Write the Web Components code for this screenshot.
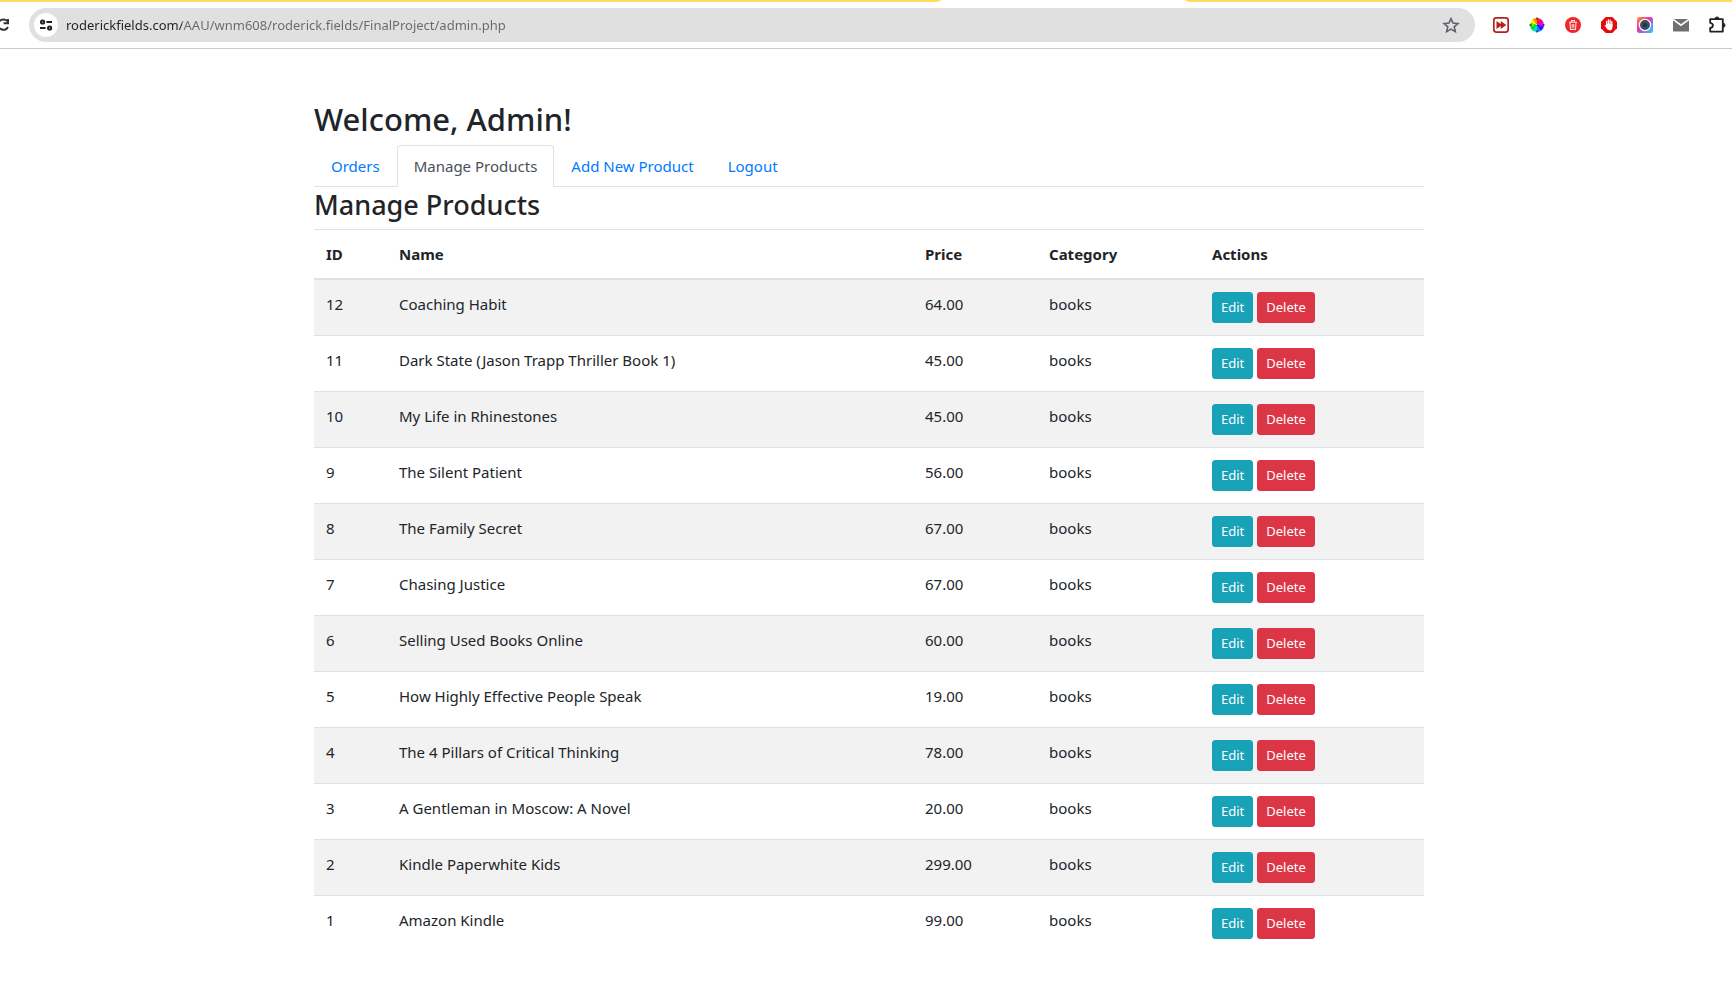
<!DOCTYPE html>
<html lang="en">
<head>
<meta charset="utf-8">
<title>Admin</title>
<style>
  body { margin: 0; background: #fff; color: #212529; font: 15px/24px "Noto Sans", "Open Sans", sans-serif; overflow-x: hidden; }
</style>
</head>
<body>
<browser-toolbar url="roderickfields.com/AAU/wnm608/roderick.fields/FinalProject/admin.php"></browser-toolbar>
<admin-page>
  <span slot="title">Welcome, Admin!</span>
  <nav-tabs slot="nav">
    <nav-tab href="#orders">Orders</nav-tab>
    <nav-tab href="#products" active>Manage Products</nav-tab>
    <nav-tab href="#new">Add New Product</nav-tab>
    <nav-tab href="#logout">Logout</nav-tab>
  </nav-tabs>
  <span slot="section">Manage Products</span>
  <product-table></product-table>
</admin-page>

<template id="toolbar-template">
  <style>
    :host { display: block; background: #fff; border-bottom: 1px solid #c9c9c9; }
    .strip { display: flex; height: 2px; }
    .strip span { background: #ffdc5c; }
    .strip .before { flex: 941; border-bottom-right-radius: 8px 2px; }
    .strip .current { flex: 244; background: #fff; }
    .strip .after { flex: 547; border-bottom-left-radius: 8px 2px; }
    .bar { display: flex; align-items: center; gap: 16px; padding: 6px 5px 6px 0; }
    button { display: block; flex: none; margin: 0; padding: 0; border: 0; background: none; line-height: 0; cursor: pointer; }
    .reload { width: 13px; }
    .address { flex: 1; display: flex; align-items: center; gap: 8px; height: 34px; padding: 0 14px 0 5px; border-radius: 17px; background: #e0e0e0; }
    .site { display: grid; place-items: center; width: 24px; height: 24px; border-radius: 50%; background: #fff; }
    input { flex: 1; min-width: 0; height: 24px; padding: 0; border: 0; outline: 0;
      font: 13px/24px "Noto Sans", "Open Sans", sans-serif; color: #5f6368; -webkit-text-fill-color: transparent;
      background: linear-gradient(to right, #202124 116px, #686868 116px); -webkit-background-clip: text; background-clip: text; }
    .wheel { width: 14px; height: 14px; margin: 3px; border-radius: 50%;
      background: conic-gradient(#f22 0 30deg, #f08 0 60deg, #d0f 0 100deg, #22f 0 145deg, #08f 0 180deg, #0dd 0 215deg, #0d4 0 260deg, #6e0 0 290deg, #fe0 0 325deg, #f80 0); }
  </style>
  <div class="strip"><span class="before"></span><span class="current"></span><span class="after"></span></div>
  <div class="bar">
    <button class="reload" aria-label="Reload">
      <svg width="13" height="16" viewBox="4 0 13 16" fill="none" stroke="#303134" stroke-width="2"><path d="M11.3 4.2A5.2 5.2 0 1 0 12 10"/><path d="M12 2v4.2H7.6"/></svg>
    </button>
    <div class="address">
      <button class="site" aria-label="Site information">
        <svg width="14" height="14" viewBox="0 0 14 14" fill="none" stroke="#202124" stroke-width="2"><circle cx="3.6" cy="4" r="1.6"/><path d="M7.4 4H13M1 10h5.6"/><circle cx="10.6" cy="10" r="1.6"/></svg>
      </button>
      <input type="text" aria-label="Address" spellcheck="false">
      <button aria-label="Bookmark this page">
        <svg width="20" height="20" viewBox="0 0 20 20" fill="none" stroke="#5f6368" stroke-width="1.6"><path d="M10 3.6l2 4.5 4.9.5-3.7 3.2 1.1 4.8-4.3-2.5-4.3 2.5 1.1-4.8-3.7-3.2 4.9-.5z"/></svg>
      </button>
    </div>
    <button aria-label="Skip extension">
      <svg width="20" height="20" viewBox="0 0 20 20"><rect x="2.8" y="2.8" width="14.4" height="14.4" rx="2.6" fill="#fff" stroke="#b2211d" stroke-width="1.7"/><path d="M5.5 6l4.2 3V6l5.6 4-5.6 4v-3l-4.2 3z" fill="#b2211d"/></svg>
    </button>
    <button aria-label="Colour picker">
      <svg width="20" height="20" viewBox="0 0 20 20"><foreignObject width="20" height="20"><div class="wheel"></div></foreignObject><path d="M10 2.5v2M10 15.5v2M2.5 10h2M15.5 10h2" stroke="#333" stroke-width="1.4"/></svg>
    </button>
    <button aria-label="Clear history">
      <svg width="20" height="20" viewBox="0 0 20 20"><circle cx="10" cy="10" r="8" fill="#f0262c"/><g fill="none" stroke="#ffd9d9" stroke-width="1.1"><path d="M6 7.2h8M8.5 7V5.6h3V7M7 7.4l.5 7h5l.5-7M9.2 9v3.8M10.8 9v3.8"/></g></svg>
    </button>
    <button aria-label="Ad blocker">
      <svg width="20" height="20" viewBox="0 0 20 20"><path d="M6.7 2h6.6L18 6.7v6.6L13.3 18H6.7L2 13.3V6.7z" fill="#e60c0c"/><path d="M7.7 11V6.4M9.4 10V5M11.1 10V5.2M12.8 11V6.6" stroke="#fff" stroke-width="1.3" stroke-linecap="round"/><path d="M7 9h6.4v3.2q0 3.1-2.8 3.1-1.9 0-3-1.8l-2-3q.5-1 1.4 0z" fill="#fff"/></svg>
    </button>
    <button aria-label="Screen capture">
      <svg width="20" height="20" viewBox="0 0 20 20"><defs><linearGradient id="cam" x1="0" y1="0" x2="1" y2="1"><stop offset="0" stop-color="#ff9a1a"/><stop offset=".4" stop-color="#f531a8"/><stop offset=".65" stop-color="#8b6cf5"/><stop offset="1" stop-color="#18e0e0"/></linearGradient></defs><rect x="2" y="2" width="16" height="16" rx="2.5" fill="url(#cam)"/><circle cx="10" cy="10" r="5.6" fill="#34495a" stroke="#fff" stroke-width="1.3"/><circle cx="10" cy="10" r="3" fill="#253442" stroke="#50677a" stroke-width=".7"/></svg>
    </button>
    <button aria-label="Mail">
      <svg width="20" height="20" viewBox="0 0 20 20"><path d="M2 4h16v12.5H2z" fill="#707070"/><path d="M2 4.4l8 5.8 8-5.8" fill="none" stroke="#fff" stroke-width="1.7"/></svg>
    </button>
    <button aria-label="Extensions">
      <svg width="20" height="20" viewBox="0 0 20 20" fill="none" stroke="#202124" stroke-width="1.8" stroke-linejoin="round"><path d="M3.2 4.2h12.6v12.4H3.2v-3.7c3.6-.6 3.6-4.4 0-5z"/><path d="M8 3.8a2 1.8 0 0 1 4 0zM16.2 8.3a1.8 2 0 0 1 0 4z" fill="#202124" stroke-width="1"/></svg>
    </button>
  </div>
</template>

<template id="page-template">
  <style>
    :host { display: block; padding: 50px 15px 48px 21px; }
    main { max-width: 1110px; margin: 0 auto; }
    h1, h2 { margin: 0 0 6px; font-weight: 500; }
    h1 { font-size: 31px; line-height: 40px; }
    h2 { font-size: 27px; line-height: 36px; }
  </style>
  <main>
    <h1><slot name="title"></slot></h1>
    <slot name="nav"></slot>
    <h2><slot name="section"></slot></h2>
    <slot></slot>
  </main>
</template>

<template id="tabs-template">
  <style>
    :host { display: block; }
    nav { display: flex; border-bottom: 1px solid #dee2e6; }
  </style>
  <nav><slot></slot></nav>
</template>

<template id="tab-template">
  <style>
    :host { display: block; margin-bottom: -1px; }
    a { display: block; padding: 8px 16px; border: 1px solid transparent; border-radius: 4px 4px 0 0; color: #007bff; text-decoration: none; }
    :host([active]) a { color: #495057; background: #fff; border-color: #dee2e6 #dee2e6 #fff; }
  </style>
  <a><slot></slot></a>
</template>

<template id="table-template">
  <style>
    :host { display: block; }
    table { width: 100%; table-layout: fixed; border-spacing: 0; }
    th, td { padding: 12px; text-align: left; vertical-align: top; border-top: 1px solid #dee2e6; }
    th { border-bottom: 2px solid #dee2e6; font-weight: 700; }
    tbody tr:first-child td { border-top: 0; }
    tbody tr:nth-child(odd) { background: #f2f2f2; }
    .id { width: 49px; }
    .price { width: 100px; }
    .category { width: 139px; }
    .actions { width: 200px; }
    .buttons { display: flex; gap: 4px; }
  </style>
  <table>
    <thead><tr><th class="id">ID</th><th>Name</th><th class="price">Price</th><th class="category">Category</th><th class="actions">Actions</th></tr></thead>
    <tbody></tbody>
  </table>
</template>

<template id="button-template">
  <style>
    :host { display: block; }
    button { display: block; margin: 0; padding: 4px 8px; border: 1px solid #17a2b8; border-radius: 3px; background: #17a2b8; color: #fff; font: 13px/21px "Noto Sans", "Open Sans", sans-serif; cursor: pointer; }
    :host([kind="danger"]) button { background: #dc3545; border-color: #dc3545; }
  </style>
  <button type="button"><slot></slot></button>
</template>

<script>
  class TemplateElement extends HTMLElement {
    constructor() {
      super();
      const template = document.getElementById(this.constructor.template);
      this.attachShadow({ mode: "open" }).append(template.content.cloneNode(true));
    }
  }

  customElements.define("browser-toolbar", class extends TemplateElement {
    static template = "toolbar-template";
    connectedCallback() {
      this.shadowRoot.querySelector("input").value = this.getAttribute("url");
    }
  });

  customElements.define("admin-page", class extends TemplateElement {
    static template = "page-template";
  });

  customElements.define("nav-tabs", class extends TemplateElement {
    static template = "tabs-template";
  });

  customElements.define("nav-tab", class extends TemplateElement {
    static template = "tab-template";
    connectedCallback() {
      this.shadowRoot.querySelector("a").href = this.getAttribute("href");
    }
  });

  customElements.define("action-button", class extends TemplateElement {
    static template = "button-template";
  });

  const products = [
    [12, "Coaching Habit", "64.00"],
    [11, "Dark State (Jason Trapp Thriller Book 1)", "45.00"],
    [10, "My Life in Rhinestones", "45.00"],
    [9, "The Silent Patient", "56.00"],
    [8, "The Family Secret", "67.00"],
    [7, "Chasing Justice", "67.00"],
    [6, "Selling Used Books Online", "60.00"],
    [5, "How Highly Effective People Speak", "19.00"],
    [4, "The 4 Pillars of Critical Thinking", "78.00"],
    [3, "A Gentleman in Moscow: A Novel", "20.00"],
    [2, "Kindle Paperwhite Kids", "299.00"],
    [1, "Amazon Kindle", "99.00"]
  ];

  customElements.define("product-table", class extends TemplateElement {
    static template = "table-template";
    connectedCallback() {
      this.shadowRoot.querySelector("tbody").innerHTML = products.map(([id, name, price]) => `
        <tr><td>${id}</td><td>${name}</td><td>${price}</td><td>books</td>
        <td><div class="buttons"><action-button>Edit</action-button><action-button kind="danger">Delete</action-button></div></td></tr>`).join("");
    }
  });
</script>
</body>
</html>
